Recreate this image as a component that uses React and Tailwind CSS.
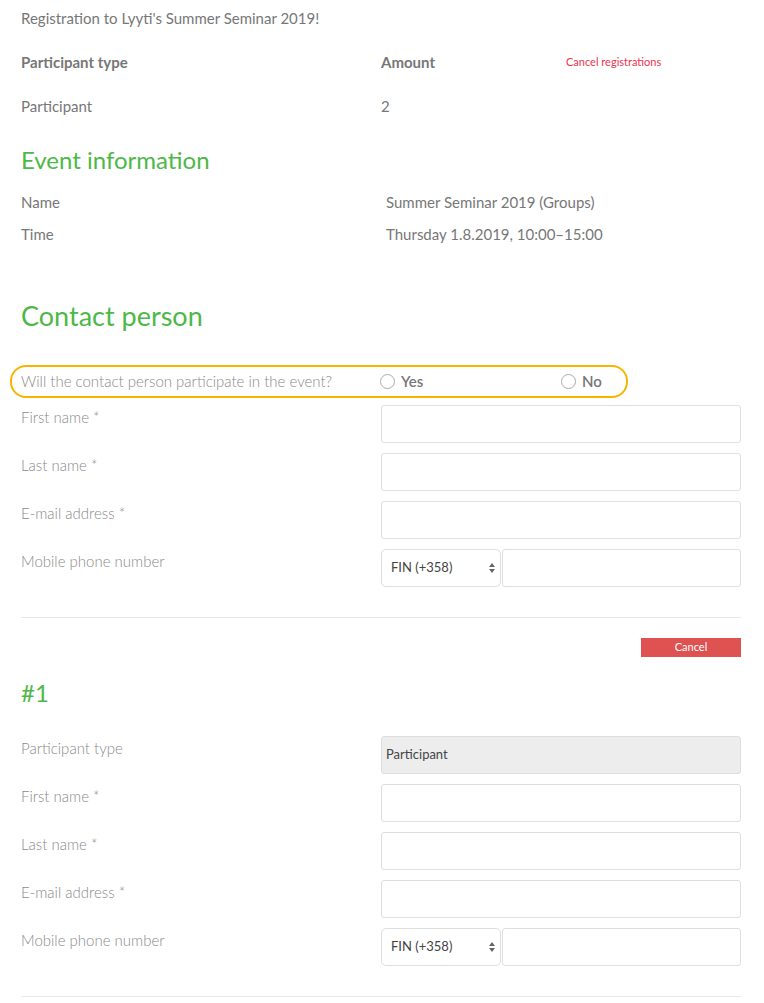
import React from "react"

const font = { fontFamily: "Lato, 'Open Sans', sans-serif" }

const Field = ({ label, children }) => (
  <div className="flex">
    <div className="w-[360px] shrink-0 text-[15px] leading-[24px] text-[#8a8a8a] font-light">{label}</div>
    <div className="w-[360px]">{children}</div>
  </div>
)

const TextInput = () => (
  <div className="h-[38px] w-full rounded-[3px] border border-[#dedede] bg-white" />
)

const SelectArrows = () => (
  <svg width="8" height="12" viewBox="0 0 8 12" className="text-[#666]">
    <path d="M4 1 L7 5 L1 5 Z" fill="currentColor" />
    <path d="M4 11 L7 7 L1 7 Z" fill="currentColor" />
  </svg>
)

const PhoneInput = () => (
  <div className="flex gap-[1px]">
    <div className="flex h-[38px] w-[120px] items-center justify-between rounded-[5px] border border-[#dedede] bg-white pl-[9px] pr-[4px] text-[13px] text-[#444]">
      <span>FIN (+358)</span>
      <SelectArrows />
    </div>
    <div className="h-[38px] flex-1 rounded-[3px] border border-[#dedede] bg-white" />
  </div>
)

const Radio = ({ label }) => (
  <div className="flex items-center gap-[6px]">
    <span className="h-[15px] w-[15px] rounded-full border border-[#aaa] bg-white" />
    <span className="text-[15px] font-semibold text-[#777]">{label}</span>
  </div>
)

const ContactFields = () => (
  <div className="flex flex-col gap-[10px]">
    <Field label="First name *"><TextInput /></Field>
    <Field label="Last name *"><TextInput /></Field>
    <Field label="E-mail address *"><TextInput /></Field>
    <Field label="Mobile phone number"><PhoneInput /></Field>
  </div>
)

export default function App() {
  return (
    <div className="min-h-screen bg-white pl-[21px] pr-[23px] text-[#777]" style={font}>
      <div className="flex h-[36px] items-center text-[15px]">Registration to Lyyti's Summer Seminar 2019!</div>

      <div className="mt-[8px] flex h-[36px] items-center text-[15px] font-bold">
        <div className="w-[360px]">Participant type</div>
        <div className="w-[185px]">Amount</div>
        <div className="text-[11px] font-normal text-[#f0334d]">Cancel registrations</div>
      </div>
      <div className="mt-[8px] flex h-[36px] items-center text-[15px]">
        <div className="w-[360px]">Participant</div>
        <div>2</div>
      </div>

      <h2 className="mt-[18px] flex h-[36px] items-center text-[24px] text-[#4db848]">Event information</h2>
      <div className="mt-[12px] flex h-[24px] items-center text-[15px]">
        <div className="w-[365px]">Name</div>
        <div>Summer Seminar 2019 (Groups)</div>
      </div>
      <div className="mt-[8px] flex h-[24px] items-center text-[15px]">
        <div className="w-[365px]">Time</div>
        <div>Thursday 1.8.2019, 10:00–15:00</div>
      </div>

      <h2 className="mt-[50px] flex h-[40px] items-center text-[27px] text-[#4db848]">Contact person</h2>

      <div className="-ml-[11px] mt-[29px] flex h-[33px] w-[618px] items-center rounded-[16px] border-2 border-[#f7b500] pl-[9px]">
        <div className="w-[359px] text-[15px] font-light text-[#8a8a8a]">Will the contact person participate in the event?</div>
        <div className="w-[181px]"><Radio label="Yes" /></div>
        <Radio label="No" />
      </div>

      <div className="mt-[7px]">
        <ContactFields />
      </div>

      <div className="mt-[30px] border-t border-[#e8e8e8]" />
      <div className="mt-[20px] flex justify-end">
        <button className="flex h-[19px] w-[100px] items-center justify-center bg-[#de5252] text-[11px] text-white">Cancel</button>
      </div>

      <h2 className="mt-[18px] flex h-[36px] items-center text-[24px] text-[#4db848]">#1</h2>

      <div className="mt-[25px] flex flex-col gap-[10px]">
        <Field label="Participant type">
          <div className="flex h-[38px] items-center rounded-[3px] border border-[#dedede] bg-[#ededed] pl-[4px] text-[13px] text-[#444]">Participant</div>
        </Field>
        <ContactFields />
      </div>

      <div className="mt-[30px] border-t border-[#e8e8e8]" />
      <div className="h-[20px]" />
    </div>
  )
}
